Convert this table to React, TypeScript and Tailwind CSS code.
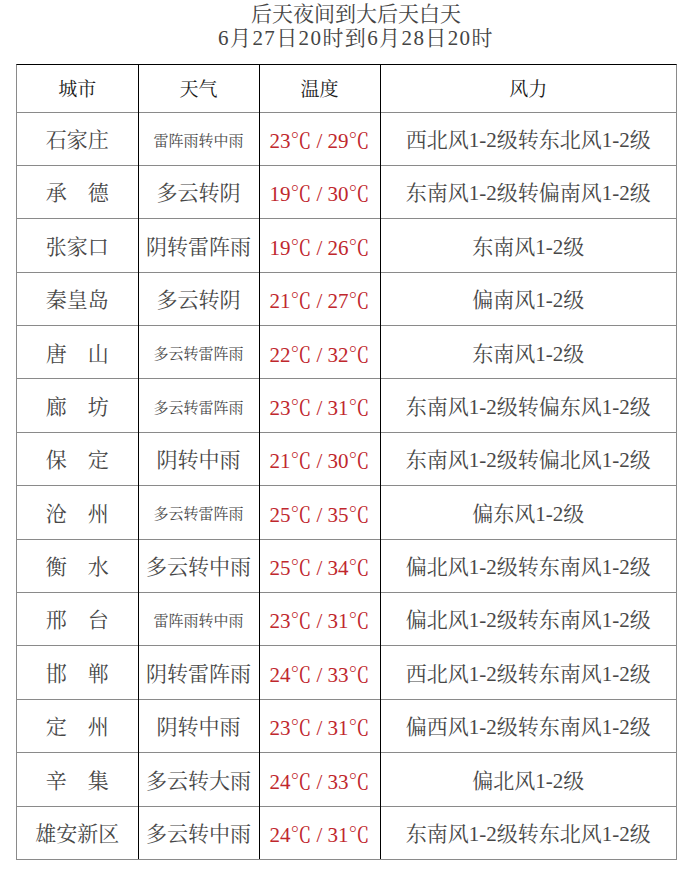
const SERIF = 'font-["Liberation_Serif","Noto_Serif_CJK_SC","Noto_Sans_CJK_SC",serif]'
const CJK = 'font-["Noto_Serif_CJK_SC","Noto_Sans_CJK_SC",serif]'

interface Row {
  city: string
  weather: string
  small?: boolean
  low: string
  high: string
  wind: string
}

const ROWS: Row[] = [
  { city: '石家庄', weather: '雷阵雨转中雨', small: true, low: '23', high: '29', wind: '西北风1-2级转东北风1-2级' },
  { city: '承　德', weather: '多云转阴', low: '19', high: '30', wind: '东南风1-2级转偏南风1-2级' },
  { city: '张家口', weather: '阴转雷阵雨', low: '19', high: '26', wind: '东南风1-2级' },
  { city: '秦皇岛', weather: '多云转阴', low: '21', high: '27', wind: '偏南风1-2级' },
  { city: '唐　山', weather: '多云转雷阵雨', small: true, low: '22', high: '32', wind: '东南风1-2级' },
  { city: '廊　坊', weather: '多云转雷阵雨', small: true, low: '23', high: '31', wind: '东南风1-2级转偏东风1-2级' },
  { city: '保　定', weather: '阴转中雨', low: '21', high: '30', wind: '东南风1-2级转偏北风1-2级' },
  { city: '沧　州', weather: '多云转雷阵雨', small: true, low: '25', high: '35', wind: '偏东风1-2级' },
  { city: '衡　水', weather: '多云转中雨', low: '25', high: '34', wind: '偏北风1-2级转东南风1-2级' },
  { city: '邢　台', weather: '雷阵雨转中雨', small: true, low: '23', high: '31', wind: '偏北风1-2级转东南风1-2级' },
  { city: '邯　郸', weather: '阴转雷阵雨', low: '24', high: '33', wind: '西北风1-2级转东南风1-2级' },
  { city: '定　州', weather: '阴转中雨', low: '23', high: '31', wind: '偏西风1-2级转东南风1-2级' },
  { city: '辛　集', weather: '多云转大雨', low: '24', high: '33', wind: '偏北风1-2级' },
  { city: '雄安新区', weather: '多云转中雨', low: '24', high: '31', wind: '东南风1-2级转东北风1-2级' },
]

export default function App() {
  return (
    <div className={`w-[690px] h-[892px] bg-white ${SERIF}`}>
      {/* Title */}
      <div className="pt-[2px] pl-[22px] text-center text-[21px] leading-[24px] text-[#444]">
        <p>后天夜间到大后天白天</p>
        <p className="tracking-[1.4px]">6月27日20时到6月28日20时</p>
      </div>

      {/* Table */}
      <div className="ml-[16px] mt-[14px] w-[661px] border border-[#8a8a8a] border-t-black">
        <table className="w-full table-fixed border-collapse">
          <colgroup>
            <col className="w-[121px]" />
            <col className="w-[121px]" />
            <col className="w-[121px]" />
            <col />
          </colgroup>
          <thead>
            <tr className="h-[47px] text-[19px] text-[#1a1a1a]">
              <th className="pt-[3px] font-normal">城市</th>
              <th className="pt-[3px] font-normal border-l border-black">天气</th>
              <th className="pt-[3px] font-normal border-l border-black">温度</th>
              <th className="pt-[3px] font-normal border-l border-black">风力</th>
            </tr>
          </thead>
          <tbody>
            {ROWS.map(r => (
              <tr key={r.city} className="h-[53.4px] text-[#474747]">
                <td className="pt-[4px] border-t border-[#8a8a8a] text-center text-[21px]">{r.city}</td>
                <td className="pt-[4px] border-t border-[#8a8a8a] border-l border-l-black text-center">
                  {r.small ? (
                    <span className="text-[15px]">{r.weather}</span>
                  ) : (
                    <span className="text-[21px]">{r.weather}</span>
                  )}
                </td>
                <td className="pt-[4px] border-t border-[#8a8a8a] border-l border-l-black text-center text-[21px] text-[#c0272d]">
                  {r.low}
                  <span className={CJK}>℃</span>
                  <span className="px-[5px]">/</span>
                  {r.high}
                  <span className={CJK}>℃</span>
                </td>
                <td className="pt-[4px] border-t border-[#8a8a8a] border-l border-l-black text-center text-[21px]">
                  {r.wind}
                </td>
              </tr>
            ))}
          </tbody>
        </table>
      </div>
    </div>
  )
}
